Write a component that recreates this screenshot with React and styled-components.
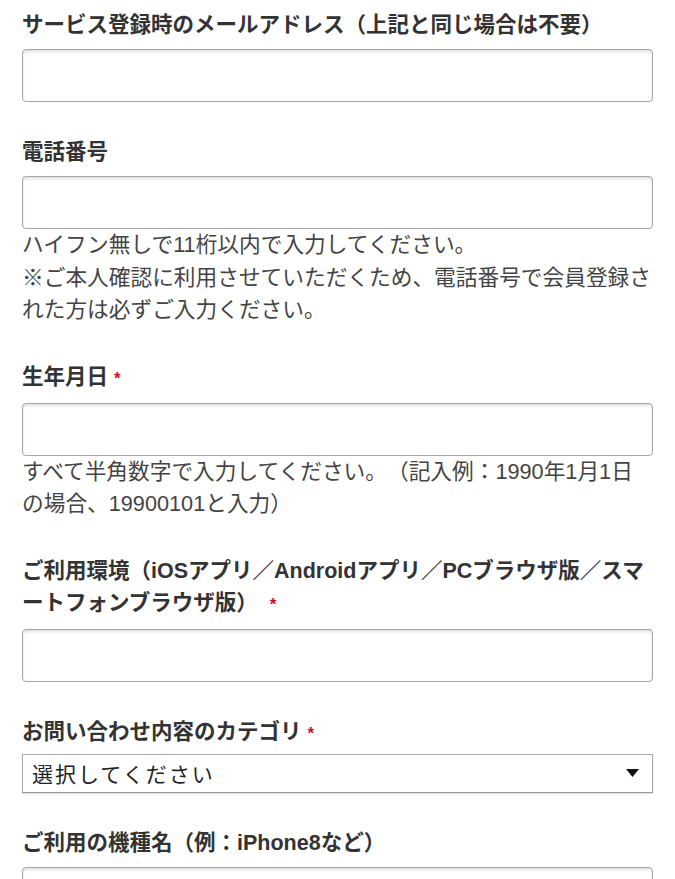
import React from "react";
import styled, { createGlobalStyle } from "styled-components";

const Global = createGlobalStyle`
  html, body { margin: 0; padding: 0; background: #fff; }
  body {
    font-family: "Noto Sans CJK JP", "Noto Sans", sans-serif;
    text-spacing-trim: space-all;
  }
`;

const Form = styled.form`
  display: flex;
  flex-direction: column;
  padding: 9px 22px 0 22px;
  gap: 34px;
`;

const Field = styled.div`
  display: flex;
  flex-direction: column;
`;

const Label = styled.label`
  font-size: 21.5px;
  line-height: 32px;
  font-weight: 700;
  color: #333;
  margin-bottom: ${(p) => (p.$tight ? "4px" : "8px")};
  font-family: "Liberation Sans", "Noto Sans CJK JP", sans-serif;
`;

const Req = styled.span`
  color: #d0111b;
  font-size: 17px;
  margin-left: 6px;
`;

const TextInput = styled.input`
  box-sizing: border-box;
  width: 100%;
  height: 53px;
  border: 1px solid #a6a6a6;
  border-radius: 4px;
  box-shadow: inset 0 2px 3px rgba(0, 0, 0, 0.12);
  background: #fff;
  padding: 0 10px;
  font-size: 20px;
  outline: none;
`;

const Help = styled.p`
  margin: 0;
  font-size: 21.7px;
  line-height: 32.5px;
  color: #444;
  font-family: "Liberation Sans", "Noto Sans CJK JP", sans-serif;
`;

const SelectBox = styled.div`
  box-sizing: border-box;
  height: 39px;
  border: 1px solid #a9a9a9;
  border-bottom-color: #999;
  box-shadow: 0 1px 1px rgba(0, 0, 0, 0.12);
  background: #fff;
  display: flex;
  align-items: center;
  justify-content: space-between;
  padding: 0 13px 0 9px;
`;

const SelectText = styled.span`
  font-size: 21px;
  letter-spacing: 2px;
  color: #222;
  font-family: "Noto Sans CJK JP", sans-serif;
`;

const Arrow = styled.svg`
  width: 13px;
  height: 8px;
  display: block;
`;

export default function App() {
  return (
    <>
      <Global />
      <Form>
        <Field>
          <Label>サービス登録時のメールアドレス（上記と同じ場合は不要）</Label>
          <TextInput type="text" />
        </Field>
        <Field>
          <Label>電話番号</Label>
          <TextInput type="text" />
          <Help>ハイフン無しで11桁以内で入力してください。</Help>
          <Help>※ご本人確認に利用させていただくため、電話番号で会員登録された方は必ずご入力ください。</Help>
        </Field>
        <Field>
          <Label>
            生年月日<Req>*</Req>
          </Label>
          <TextInput type="text" />
          <Help>すべて半角数字で入力してください。（記入例：1990年1月1日の場合、19900101と入力）</Help>
        </Field>
        <Field>
          <Label>
            ご利用環境（iOSアプリ／Androidアプリ／PCブラウザ版／スマートフォンブラウザ版） <Req>*</Req>
          </Label>
          <TextInput type="text" />
        </Field>
        <Field>
          <Label $tight>
            お問い合わせ内容のカテゴリ<Req>*</Req>
          </Label>
          <SelectBox>
            <SelectText>選択してください</SelectText>
            <Arrow viewBox="0 0 13 8">
              <polygon points="0,0 13,0 6.5,8" fill="#111" />
            </Arrow>
          </SelectBox>
        </Field>
        <Field>
          <Label>ご利用の機種名（例：iPhone8など）</Label>
          <TextInput type="text" />
        </Field>
      </Form>
    </>
  );
}
